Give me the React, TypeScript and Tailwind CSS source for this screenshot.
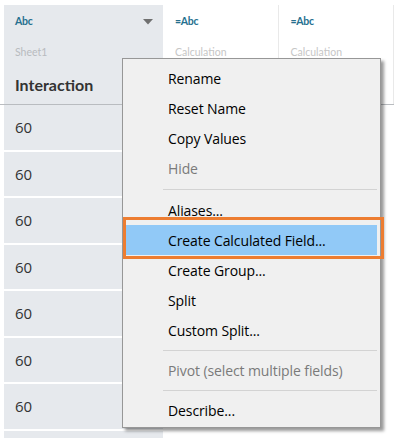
const rowHeights = [47, 46, 47, 46, 47, 46, 47, 47];

type Item = { label: string; disabled?: boolean; active?: boolean } | { sep: number };

const menu: Item[] = [
  { label: "Rename" },
  { label: "Reset Name" },
  { label: "Copy Values" },
  { label: "Hide", disabled: true },
  { sep: 12 },
  { label: "Aliases..." },
  { label: "Create Calculated Field...", active: true },
  { label: "Create Group..." },
  { label: "Split" },
  { label: "Custom Split..." },
  { sep: 10 },
  { label: "Pivot (select multiple fields)", disabled: true },
  { sep: 10 },
  { label: "Describe..." },
];

function Caret() {
  return (
    <svg width="10" height="6" viewBox="0 0 10 6" className="fill-[#707070]">
      <polygon points="0,0 10,0 5,5.5" />
    </svg>
  );
}

function HeaderCell({ first, label }: { first?: boolean; label: string }) {
  return (
    <div
      className={
        first
          ? "w-[159px] h-[99px] bg-[#e6e9ed] flex flex-col pl-[11px] pr-[10px]"
          : "flex-1 h-[99px] bg-white flex flex-col pl-[12px] border-r border-[#e9e9e9]"
      }
    >
      <div className="h-[32px] flex items-center justify-between pt-[1px]">
        <span className="text-[10.5px] font-bold text-[#26708f] tracking-tight">{label}</span>
        {first && <Caret />}
      </div>
      <div className={"h-[32px] flex items-center text-[10.5px] " + (first ? "text-[#b8bbbf]" : "text-[#c6c6c6]")}>
        {first ? "Sheet1" : "Calculation"}
      </div>
      {first && (
        <div className="h-[32px] flex items-center text-[16px] font-bold text-[#333]">Interaction</div>
      )}
    </div>
  );
}

export default function App() {
  return (
    <div className="relative w-[394px] h-[438px] overflow-hidden bg-white font-['Lato',sans-serif]">
      {/* table */}
      <div className="pt-[5px]">
        <div className="flex pl-[4px] border-b border-[#b9bcc0]">
          <HeaderCell first label="Abc" />
          <HeaderCell label="=Abc" />
          <HeaderCell label="=Abc" />
        </div>
        {rowHeights.map((h, i) => (
          <div key={i} className="flex pl-[4px] border-b-2 border-white" style={{ height: h }}>
            <div className="w-[159px] bg-[#e6e9ed] flex items-center pl-[11px] text-[15px] text-[#333] font-['Open_Sans',sans-serif]">
              {i < 7 ? "60" : ""}
            </div>
            <div className="flex-1 bg-white" />
          </div>
        ))}
      </div>

      {/* context menu */}
      <div className="absolute left-[122px] top-[58px] w-[259px] bg-[#f0f0f0] border border-[#979797] shadow-[3px_3px_3px_rgba(0,0,0,0.4)] pt-[4px] pb-[2px] font-['Open_Sans',sans-serif] text-[14px]">
        {menu.map((it, i) =>
          "sep" in it ? (
            <div key={i} className="flex items-center ml-[40px] mr-[3px]" style={{ height: it.sep }}>
              <div className="h-px w-full bg-[#d3d3d3]" />
            </div>
          ) : (
            <div
              key={i}
              className={
                "h-[30px] flex items-center pl-[43px] mx-[2px] mr-[3px] tracking-[-0.1px] " +
                (it.active ? "bg-[#91c9f7] " : "") +
                (it.disabled ? "text-[#7a7a7a]" : "text-black")
              }
            >
              {it.label}
            </div>
          )
        )}
      </div>

      {/* orange callout */}
      <div className="absolute left-[123px] top-[217px] w-[261px] h-[42px] border-[3px] border-[#ed7d31]" />
    </div>
  );
}
